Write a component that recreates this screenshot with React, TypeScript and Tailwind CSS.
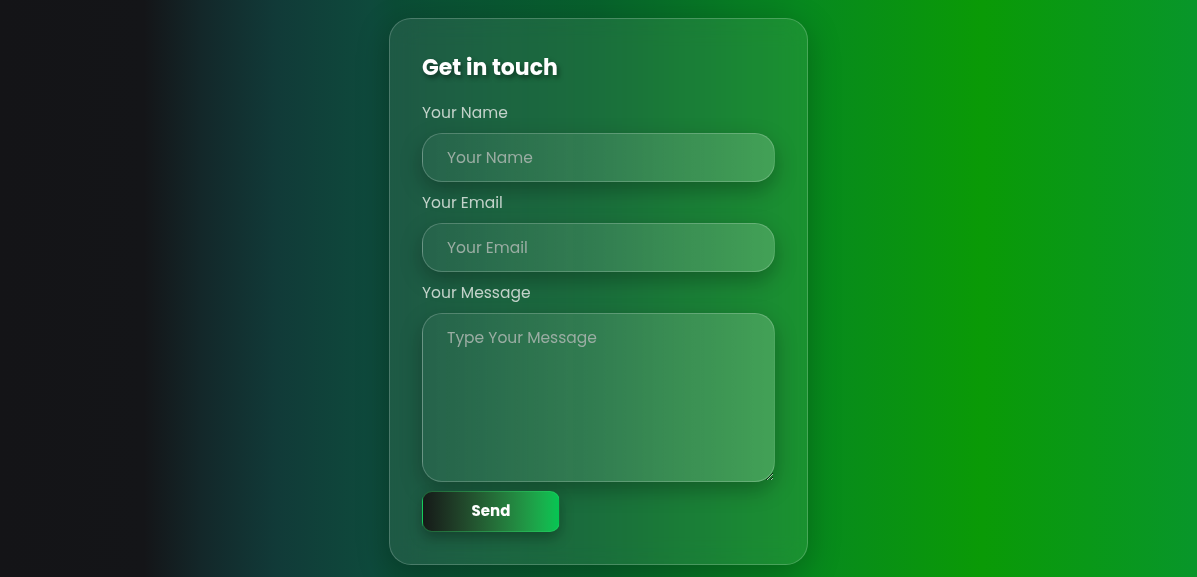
import React from "react";

const fieldCls =
  "w-[353px] rounded-[20px] border border-white/20 bg-gradient-to-r from-white/[0.04] to-white/[0.18] px-[24px] text-[15.5px] text-white placeholder:text-[#9aada3] outline-none shadow-[0_8px_22px_rgba(0,0,0,0.28)] mb-[9px]";

export default function App() {
  return (
    <div
      className="w-full h-[577px] overflow-hidden flex justify-center items-start pt-[18px] font-['Poppins','Open_Sans',sans-serif]"
      style={{
        background:
          "linear-gradient(to right, #141417 0%, #141518 12%, #13282a 17%, #113a38 23%, #0e4a3c 31%, #0b4c36 33%, #07622c 50%, #07891f 67%, #0a9a06 82%, #08962a 100%)",
      }}
    >
      <div className="w-[419px] h-[547px] rounded-[22px] border border-white/20 bg-white/[0.08] backdrop-blur-md shadow-[0_8px_32px_rgba(0,0,0,0.25)] px-8 pt-8">
        <h2 className="text-[22px] leading-[34px] font-bold text-white mb-4 [text-shadow:2px_3px_5px_rgba(0,0,0,0.45)]">
          Get in touch
        </h2>
        <form className="flex flex-col" onSubmit={(e) => e.preventDefault()}>
          <label className="text-[15.5px] leading-6 text-[#c3d2ca] mb-2">Your Name</label>
          <input placeholder="Your Name" className={"h-[49px] " + fieldCls} />
          <label className="text-[15.5px] leading-6 text-[#c3d2ca] mb-2">Your Email</label>
          <input placeholder="Your Email" className={"h-[49px] " + fieldCls} />
          <label className="text-[15.5px] leading-6 text-[#c3d2ca] mb-2">Your Message</label>
          <textarea
            placeholder="Type Your Message"
            className={"h-[169px] pt-[12px] leading-6 " + fieldCls}
          />
          <button
            type="submit"
            className="h-[41px] w-[138px] rounded-[10px] border border-[#2fd46a]/40 bg-gradient-to-r from-[#151a18] to-[#04c653] text-[15px] font-bold text-white shadow-[0_6px_14px_rgba(0,0,0,0.3)]"
          >
            Send
          </button>
        </form>
      </div>
    </div>
  );
}
